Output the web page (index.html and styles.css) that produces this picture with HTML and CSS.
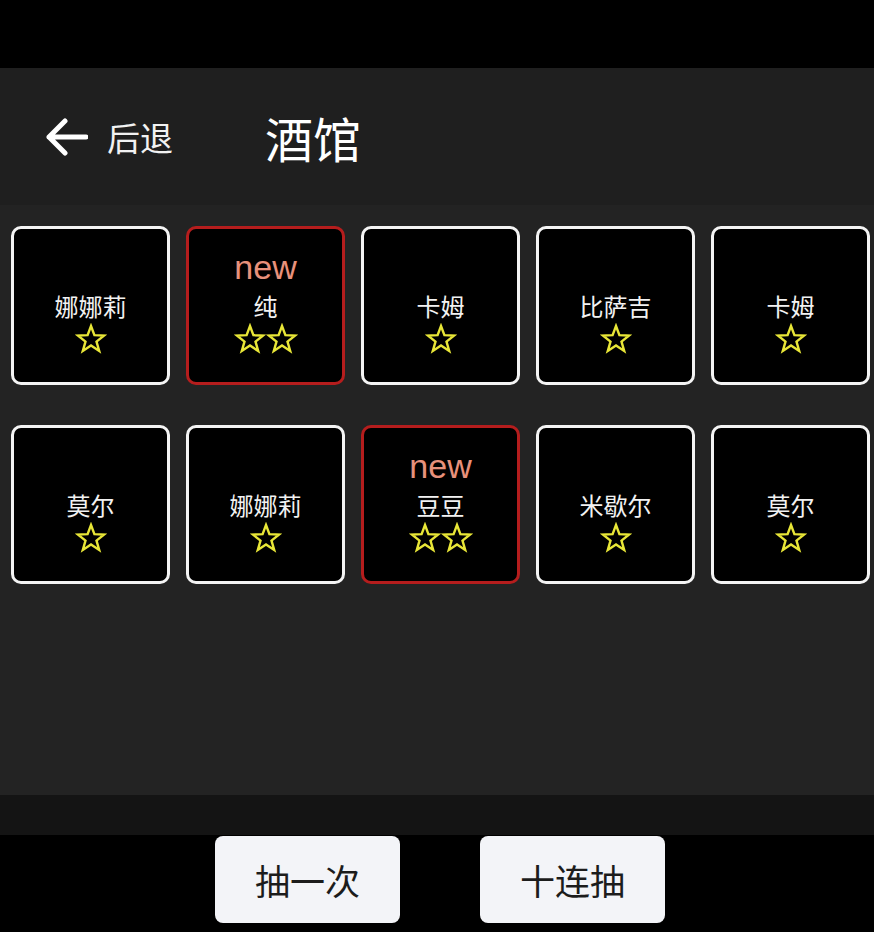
FILE: index.html
```html
<!DOCTYPE html>
<html lang="zh">
<head>
<meta charset="utf-8">
<link rel="stylesheet" href="styles.css">
</head>
<body>
<div class="app">
  <div class="topbar"></div>
  <header class="header">
    <div class="back">
      <svg class="arrow" viewBox="0 0 44 40" width="44" height="40"><path d="M42 20 H5 M21 4 L5 20 L21 36" fill="none" stroke="#fff" stroke-width="5" stroke-linecap="round" stroke-linejoin="round"/></svg>
      <span class="back-text">后退</span>
    </div>
    <h1 class="title">酒馆</h1>
  </header>
  <main class="content">
    <div class="grid">
      <div class="card"><div class="new hidden">new</div><div class="name">娜娜莉</div><div class="stars"><svg class="star" viewBox="0 0 32 32"><path d="M16 3 L19.4 12.2 L29.2 12.5 L21.5 18.6 L24.2 28 L16 22.5 L7.8 28 L10.5 18.6 L2.8 12.5 L12.6 12.2 Z"/></svg></div></div>
      <div class="card red"><div class="new">new</div><div class="name">纯</div><div class="stars"><svg class="star" viewBox="0 0 32 32"><path d="M16 3 L19.4 12.2 L29.2 12.5 L21.5 18.6 L24.2 28 L16 22.5 L7.8 28 L10.5 18.6 L2.8 12.5 L12.6 12.2 Z"/></svg><svg class="star" viewBox="0 0 32 32"><path d="M16 3 L19.4 12.2 L29.2 12.5 L21.5 18.6 L24.2 28 L16 22.5 L7.8 28 L10.5 18.6 L2.8 12.5 L12.6 12.2 Z"/></svg></div></div>
      <div class="card"><div class="new hidden">new</div><div class="name">卡姆</div><div class="stars"><svg class="star" viewBox="0 0 32 32"><path d="M16 3 L19.4 12.2 L29.2 12.5 L21.5 18.6 L24.2 28 L16 22.5 L7.8 28 L10.5 18.6 L2.8 12.5 L12.6 12.2 Z"/></svg></div></div>
      <div class="card"><div class="new hidden">new</div><div class="name">比萨吉</div><div class="stars"><svg class="star" viewBox="0 0 32 32"><path d="M16 3 L19.4 12.2 L29.2 12.5 L21.5 18.6 L24.2 28 L16 22.5 L7.8 28 L10.5 18.6 L2.8 12.5 L12.6 12.2 Z"/></svg></div></div>
      <div class="card"><div class="new hidden">new</div><div class="name">卡姆</div><div class="stars"><svg class="star" viewBox="0 0 32 32"><path d="M16 3 L19.4 12.2 L29.2 12.5 L21.5 18.6 L24.2 28 L16 22.5 L7.8 28 L10.5 18.6 L2.8 12.5 L12.6 12.2 Z"/></svg></div></div>
      <div class="card"><div class="new hidden">new</div><div class="name">莫尔</div><div class="stars"><svg class="star" viewBox="0 0 32 32"><path d="M16 3 L19.4 12.2 L29.2 12.5 L21.5 18.6 L24.2 28 L16 22.5 L7.8 28 L10.5 18.6 L2.8 12.5 L12.6 12.2 Z"/></svg></div></div>
      <div class="card"><div class="new hidden">new</div><div class="name">娜娜莉</div><div class="stars"><svg class="star" viewBox="0 0 32 32"><path d="M16 3 L19.4 12.2 L29.2 12.5 L21.5 18.6 L24.2 28 L16 22.5 L7.8 28 L10.5 18.6 L2.8 12.5 L12.6 12.2 Z"/></svg></div></div>
      <div class="card red"><div class="new">new</div><div class="name">豆豆</div><div class="stars"><svg class="star" viewBox="0 0 32 32"><path d="M16 3 L19.4 12.2 L29.2 12.5 L21.5 18.6 L24.2 28 L16 22.5 L7.8 28 L10.5 18.6 L2.8 12.5 L12.6 12.2 Z"/></svg><svg class="star" viewBox="0 0 32 32"><path d="M16 3 L19.4 12.2 L29.2 12.5 L21.5 18.6 L24.2 28 L16 22.5 L7.8 28 L10.5 18.6 L2.8 12.5 L12.6 12.2 Z"/></svg></div></div>
      <div class="card"><div class="new hidden">new</div><div class="name">米歇尔</div><div class="stars"><svg class="star" viewBox="0 0 32 32"><path d="M16 3 L19.4 12.2 L29.2 12.5 L21.5 18.6 L24.2 28 L16 22.5 L7.8 28 L10.5 18.6 L2.8 12.5 L12.6 12.2 Z"/></svg></div></div>
      <div class="card"><div class="new hidden">new</div><div class="name">莫尔</div><div class="stars"><svg class="star" viewBox="0 0 32 32"><path d="M16 3 L19.4 12.2 L29.2 12.5 L21.5 18.6 L24.2 28 L16 22.5 L7.8 28 L10.5 18.6 L2.8 12.5 L12.6 12.2 Z"/></svg></div></div>
    </div>
  </main>
  <div class="strip"></div>
  <footer class="footer">
    <button class="btn">抽一次</button>
    <button class="btn">十连抽</button>
  </footer>
</div>
</body>
</html>
```
FILE: styles.css
```css
* { box-sizing: border-box; }
html, body { margin: 0; padding: 0; background: #000; }
body { font-family: "Noto Sans CJK SC", "Noto Sans", sans-serif; color: #fff; }
.app { width: 874px; height: 932px; display: flex; flex-direction: column; overflow: hidden; }
.topbar { height: 68px; background: #000; flex: none; }
.header { height: 137px; background: #1f1f1f; display: flex; align-items: center; padding-left: 44px; flex: none; }
.back { display: flex; align-items: center; width: 221px; }
.arrow { display: block; margin-right: 19px; }
.back-text { font-size: 33px; line-height: 40px; color: #f2f2f2; }
.title { margin: 0; font-size: 48px; font-weight: 400; line-height: 60px; color: #fff; }
.content { height: 590px; background: #232323; padding: 21px 0 0 11px; flex: none; }
.grid { display: grid; grid-template-columns: repeat(5, 159px); column-gap: 16px; row-gap: 40px; }
.card { height: 159px; background: #000; border: 3px solid #f4f4f4; border-radius: 10px; display: flex; flex-direction: column; align-items: center; padding-top: 21px; }
.card.red { border-color: #b51d1d; }
.new { font-family: "Liberation Sans", Arial, sans-serif; font-size: 34px; line-height: 34px; height: 34px; color: #e8917b; }
.new.hidden { visibility: hidden; }
.name { margin-top: 8px; font-size: 24px; line-height: 28px; color: #f2f2f2; }
.stars { margin-top: 3px; display: flex; height: 32px; }
.star { width: 32px; height: 32px; fill: none; stroke: #e8e637; stroke-width: 2.4; stroke-linejoin: miter; }
.strip { height: 40px; background: #141414; flex: none; }
.footer { flex: 1; background: #000; display: flex; justify-content: center; gap: 80px; padding-top: 1px; padding-left: 6px; }
.btn { width: 185px; height: 87px; border: none; border-radius: 8px; background: #f3f4f8; color: #1c1c1c; font-family: "Noto Sans CJK SC", sans-serif; font-size: 35px; padding: 0; }
```
